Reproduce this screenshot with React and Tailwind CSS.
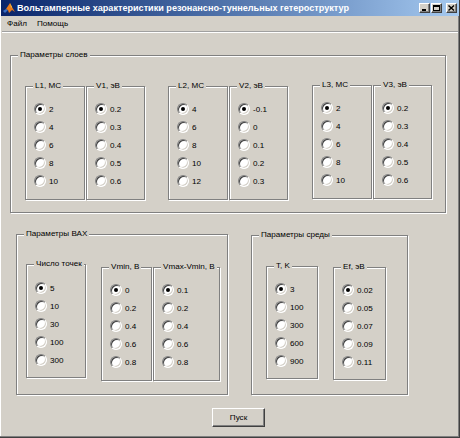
import React from "react";

function Radio({ checked }) {
  return (
    <span className="w-[12px] h-[12px] shrink-0 rounded-full bg-white border border-t-[#808080] border-l-[#808080] border-b-white border-r-white shadow-[inset_1px_1px_0_#404040,inset_-1px_-1px_0_#d4d0c8] flex items-center justify-center">
      {checked && <span className="w-[4px] h-[4px] rounded-full bg-black" />}
    </span>
  );
}

function Group({ label, className, children }) {
  return (
    <div className={"relative shrink-0 border border-[#808080] shadow-[inset_1px_1px_0_#ffffff,1px_1px_0_#ffffff] " + className}>
      <span className="absolute left-[7px] top-[-7px] px-[2px] bg-[#d4d0c8] leading-[11px] whitespace-nowrap">{label}</span>
      {children}
    </div>
  );
}

function RadioList({ items, pad = "pt-[13px]" }) {
  return (
    <div className={"flex flex-col pl-[8px] " + pad}>
      {items.map((it, i) => (
        <div key={i} className="h-[18px] flex items-center gap-[3px]">
          <Radio checked={i === 0} />
          <span className="leading-[11px]">{it}</span>
        </div>
      ))}
    </div>
  );
}

function Pair({ a, b, className = "" }) {
  return (
    <div className={"flex shrink-0 " + className}>
      <Group label={a.label} className="w-[60px] h-[114px]">
        <RadioList items={a.items} />
      </Group>
      <Group label={b.label} className="w-[59px] h-[114px] ml-[1px]">
        <RadioList items={b.items} />
      </Group>
    </div>
  );
}

function MatlabIcon() {
  return (
    <svg width="12" height="12" viewBox="0 0 12 12">
      <path d="M0 9 L3 7 L5 8 L2 11 Z" fill="#3b6fc4" />
      <path d="M3 7 L7 1 L9 5 L12 10 L9 8 L6 11 L5 8 Z" fill="#e87a1c" />
      <path d="M7 1 L9 5 L8 6 Z" fill="#f7c64a" />
    </svg>
  );
}

function CapButton({ children, className = "" }) {
  return (
    <div className={"w-[11px] h-[10px] bg-[#d4d0c8] border-t border-l border-white border-b border-r border-b-[#404040] border-r-[#404040] shadow-[inset_-1px_-1px_0_#808080] flex items-center justify-center " + className}>
      {children}
    </div>
  );
}

export default function App() {
  return (
    <div className="w-[460px] h-[438px] bg-[#d4d0c8] font-['Liberation_Sans',Arial,sans-serif] text-[8.1px] text-black flex flex-col overflow-hidden shadow-[inset_-1px_-1px_0_#404040,inset_-2px_-2px_0_#808080,inset_1px_0_0_#ffffff]">
      {/* Title bar */}
      <div className="h-[16px] shrink-0 mx-[1px] flex items-center bg-gradient-to-r from-[#0a246a] to-[#a6caf0]">
        <div className="ml-[2px] w-[12px] h-[12px]">
          <MatlabIcon />
        </div>
        <span className="ml-[2px] text-white font-bold text-[9.1px] leading-[11px] whitespace-nowrap">
          Вольтамперные характеристики резонансно-туннельных гетероструктур
        </span>
        <div className="ml-auto mr-[2px] flex items-center">
          <CapButton>
            <span className="w-[4px] h-[2px] bg-black mt-[4px] -ml-[1px]" />
          </CapButton>
          <CapButton className="ml-[1px]">
            <span className="w-[7px] h-[6px] border border-black border-t-2" />
          </CapButton>
          <CapButton className="ml-[4px]">
            <svg width="7" height="6" viewBox="0 0 7 6">
              <path d="M0.5 0.5 L6 5.5 M6 0.5 L0.5 5.5" stroke="#000" strokeWidth="1.4" />
            </svg>
          </CapButton>
        </div>
      </div>

      {/* Menu bar */}
      <div className="h-[15px] shrink-0 flex items-center pl-[7px] gap-[10px] leading-[11px]">
        <span>Файл</span>
        <span>Помощь</span>
      </div>
      <div className="h-[1px] shrink-0 bg-[#a0a0a0] mx-[2px]" />
      <div className="h-[1px] shrink-0 bg-white mx-[2px]" />

      {/* Top group */}
      <Group label="Параметры слоев" className="ml-[10px] mt-[22px] w-[436px] h-[158px]">
        <div className="flex items-start pt-[30px] pl-[14px]">
          <Pair
            a={{ label: "L1, MC", items: ["2", "4", "6", "8", "10"] }}
            b={{ label: "V1, эВ", items: ["0.2", "0.3", "0.4", "0.5", "0.6"] }}
          />
          <Pair
            className="ml-[23px]"
            a={{ label: "L2, MC", items: ["4", "6", "8", "10", "12"] }}
            b={{ label: "V2, эВ", items: ["-0.1", "0", "0.1", "0.2", "0.3"] }}
          />
          <Pair
            className="ml-[24px] -mt-[1px]"
            a={{ label: "L3, MC", items: ["2", "4", "6", "8", "10"] }}
            b={{ label: "V3, эВ", items: ["0.2", "0.3", "0.4", "0.5", "0.6"] }}
          />
        </div>
      </Group>

      {/* Bottom groups */}
      <div className="flex items-start mt-[21px] ml-[16px]">
        <Group label="Параметры ВАХ" className="w-[212px] h-[161px]">
          <div className="flex items-start pt-[29px] pl-[9px]">
            <Group label="Число точек" className="w-[60px] h-[114px]">
              <RadioList items={["5", "10", "30", "100", "300"]} pad="pt-[14px]" />
            </Group>
            <div className="flex ml-[15px] mt-[3px]">
              <Group label="Vmin, B" className="w-[51px] h-[114px]">
                <RadioList items={["0", "0.2", "0.4", "0.6", "0.8"]} />
              </Group>
              <Group label="Vmax-Vmin, B" className="w-[67px] h-[114px] ml-[1px]">
                <RadioList items={["0.1", "0.2", "0.4", "0.6", "0.8"]} />
              </Group>
            </div>
          </div>
        </Group>
        <Group label="Параметры среды" className="w-[157px] h-[160px] ml-[23px] mt-[1px]">
          <div className="flex items-start pt-[30px] pl-[14px]">
            <Group label="T, K" className="w-[52px] h-[113px]">
              <RadioList items={["3", "100", "300", "600", "900"]} />
            </Group>
            <Group label="Ef, эВ" className="w-[53px] h-[113px] ml-[15px] mt-[1px]">
              <RadioList items={["0.02", "0.05", "0.07", "0.09", "0.11"]} />
            </Group>
          </div>
        </Group>
      </div>

      {/* Button */}
      <div className="mt-[13px] ml-[212px] w-[53px] h-[19px] shrink-0 flex items-center justify-center border border-t-white border-l-white border-b-[#404040] border-r-[#404040] shadow-[inset_-1px_-1px_0_#808080] leading-[11px]">
        Пуск
      </div>
    </div>
  );
}
